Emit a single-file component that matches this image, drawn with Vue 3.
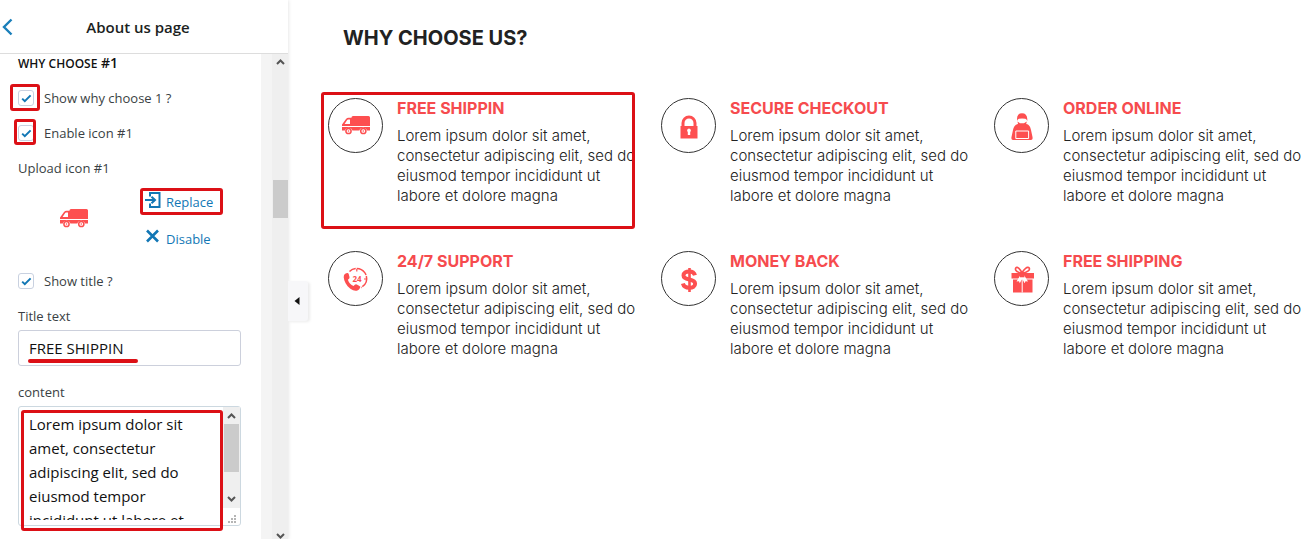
<script setup>
import { ref } from 'vue'

const showItem = ref(true)
const enableIcon = ref(true)
const showTitle = ref(true)
const titleText = ref('FREE SHIPPIN')
const content = ref('Lorem ipsum dolor sit amet, consectetur adipiscing elit, sed do eiusmod tempor incididunt ut labore et dolore magna')

const blurb = 'Lorem ipsum dolor sit amet, consectetur adipiscing elit, sed do eiusmod tempor incididunt ut labore et dolore magna'
const features = [
  { icon: 'truck', title: 'FREE SHIPPIN', marked: true },
  { icon: 'lock', title: 'SECURE CHECKOUT' },
  { icon: 'person', title: 'ORDER ONLINE' },
  { icon: 'support', title: '24/7 SUPPORT' },
  { icon: 'dollar', title: 'MONEY BACK' },
  { icon: 'gift', title: 'FREE SHIPPING' },
]
</script>

<template>
  <div class="customizer">
    <aside class="sidebar">
      <header class="bar">
        <button class="back" type="button" aria-label="Back">
          <svg width="12" height="18" viewBox="0 0 12 18"><path d="M10.500 1.500 3 9l7.500 7.500" fill="none" stroke="#1a7fba" stroke-width="2.400" /></svg>
        </button>
        <h1>About us page</h1>
      </header>
      <div class="body">
        <form class="fields" @submit.prevent>
          <h2><span>WHY CHOOSE</span> #1</h2>
          <label class="check">
            <span class="tick wide"><input v-model="showItem" type="checkbox" /><svg v-if="showItem" width="11" height="9" viewBox="0 0 11 9"><path d="m1.200 4.600 2.600 2.500L9.600 1.400" /></svg></span>
            Show why choose 1 ?
          </label>
          <label class="check">
            <span class="tick narrow"><input v-model="enableIcon" type="checkbox" /><svg v-if="enableIcon" width="11" height="9" viewBox="0 0 11 9"><path d="m1.200 4.600 2.600 2.500L9.600 1.400" /></svg></span>
            Enable icon #1
          </label>
          <p class="caption">Upload icon #1</p>
          <div class="upload">
            <div class="thumb">
              <svg width="28" height="19" viewBox="0 0 28 19" fill="#fd4f50">
                <path d="M11 0h15.500Q28 0 28 1.500V10H0V8.500L4 3Q5 1.800 6.500 1.800h3V1.500Q9.500 0 11 0zM5.200 4 2.600 8H8V3.500H6Q5.500 3.500 5.200 4z" fill-rule="evenodd" />
                <path d="M0 11h28v3.500h-3a4 4 0 0 0-7.600 0h-7a4 4 0 0 0-7.600 0H0z" />
                <g fill="#fff" stroke="#fd4f50" stroke-width="1.500"><circle cx="6.500" cy="15" r="2.600" /><circle cx="21.300" cy="15" r="2.600" /></g>
                <circle cx="6.500" cy="15" r=".8" /><circle cx="21.300" cy="15" r=".8" />
              </svg>
            </div>
            <div class="actions">
              <button class="action boxed" type="button">
                <svg width="16" height="16" viewBox="0 0 16 16" fill="none" stroke="#1277b5" stroke-width="2"><path d="M5 4.500V1h9.500v14H5v-3.500M0 8h9M6.500 4.800 10 8l-3.500 3.200" /></svg>
                <span>Replace</span>
              </button>
              <button class="action" type="button">
                <svg width="16" height="16" viewBox="0 0 16 16" fill="none" stroke="#1277b5" stroke-width="2.600"><path d="m2 1.500 11 11M13 1.500l-11 11" /></svg>
                <span>Disable</span>
              </button>
            </div>
          </div>
          <label class="check">
            <span class="tick"><input v-model="showTitle" type="checkbox" /><svg v-if="showTitle" width="11" height="9" viewBox="0 0 11 9"><path d="m1.200 4.600 2.600 2.500L9.600 1.400" /></svg></span>
            Show title ?
          </label>
          <label class="caption" for="title-text">Title text</label>
          <div class="line-field"><input id="title-text" v-model="titleText" type="text" /></div>
          <label class="caption" for="content-text">content</label>
          <div class="area">
            <textarea id="content-text" v-model="content"></textarea>
            <div class="area-side">
              <div class="area-scroll">
                <svg width="9" height="6" viewBox="0 0 9 6"><path d="m1 5 3.500-3.500L8 5" /></svg>
                <span class="area-thumb"></span>
                <svg width="9" height="6" viewBox="0 0 9 6"><path d="m1 1 3.500 3.500L8 1" /></svg>
              </div>
              <svg class="grip" width="9" height="9" viewBox="0 0 9 9" fill="#b5b5b5"><path d="M6 0h2v2H6zM3 3h2v2H3zM6 3h2v2H6zM0 6h2v2H0zM3 6h2v2H3zM6 6h2v2H6z" /></svg>
            </div>
          </div>
        </form>
        <div class="gutter"></div>
        <div class="scrollbar">
          <svg width="9" height="6" viewBox="0 0 9 6"><path d="m1 5 3.500-3.500L8 5" /></svg>
          <span class="thumb-bar"></span>
          <svg width="9" height="6" viewBox="0 0 9 6"><path d="m1 1 3.500 3.500L8 1" /></svg>
        </div>
      </div>
      <button class="collapse" type="button" aria-label="Hide controls">
        <svg width="6" height="8" viewBox="0 0 6 8"><path d="M5.500 0v8L.5 4z" fill="#111" /></svg>
      </button>
    </aside>

    <main class="preview">
      <h2>WHY CHOOSE US?</h2>
      <div class="grid">
        <article v-for="f in features" :key="f.title" class="feature" :class="{ marked: f.marked }">
          <div class="ring">
            <svg v-if="f.icon === 'truck'" width="28" height="19" viewBox="0 0 28 19" fill="#fd4f50">
              <path d="M11 0h15.500Q28 0 28 1.500V10H0V8.500L4 3Q5 1.800 6.500 1.800h3V1.500Q9.500 0 11 0zM5.200 4 2.600 8H8V3.500H6Q5.500 3.500 5.200 4z" fill-rule="evenodd" />
              <path d="M0 11h28v3.500h-3a4 4 0 0 0-7.600 0h-7a4 4 0 0 0-7.600 0H0z" />
              <g fill="#fff" stroke="#fd4f50" stroke-width="1.500"><circle cx="6.500" cy="15" r="2.600" /><circle cx="21.300" cy="15" r="2.600" /></g>
              <circle cx="6.500" cy="15" r=".8" /><circle cx="21.300" cy="15" r=".8" />
            </svg>
            <svg v-else-if="f.icon === 'lock'" width="28" height="28" viewBox="0 0 28 28" fill="#fd4f50">
              <path d="M8 15V11a6 6 0 0 1 12 0v4" fill="none" stroke="#fd4f50" stroke-width="3" />
              <path d="M5.500 14h17v12.500h-17z" />
              <path d="M14 16.500a2 2 0 0 1 1.200 3.500V23h-2.400v-3a2 2 0 0 1 1.200-3.500z" fill="#fff" />
            </svg>
            <svg v-else-if="f.icon === 'person'" width="28" height="30" viewBox="0 0 28 30" fill="#fd4f50">
              <path d="M9 10V8q0-5.700 5-5.700T19.300 8v2q-.6-1.900-2-2.300-3.300-.6-6.400 0Q9.500 8.100 9 10z" />
              <path d="M9.500 10.500 12 12.300h4l2.800-1.800-.6 2.500c3.300.8 4.200 3 4.800 6l1.500 7q.6 3-1.500 3H5q-2.100 0-1.500-3L5 19c.6-3 1.700-5.200 5-6z" />
              <path d="M7.800 27.500V20h12.800v7.500z" fill="none" stroke="#fff" stroke-width="1" />
            </svg>
            <svg v-else-if="f.icon === 'support'" width="28" height="28" viewBox="0 0 28 28" fill="#fd4f50">
              <path d="M7.500 6.500a10 10 0 1 1 11.500 16" fill="none" stroke="#fd4f50" stroke-width="1.500" stroke-dasharray="7 1 12 1 12 1 20" />
              <path d="M14.800 4v2.500M24.500 14h-2.500" stroke="#fd4f50" stroke-width="1.200" />
              <path d="M3.200 8.800 5 8q1.300-.3 1.700 1l.8 3q.3 1.300-.8 2l-.8.7q1.300 4.500 5.700 6.200l1.200-1.100q.9-.8 2-.3l2.700 1.400q1.200.7.5 2-1 1.800-2.100 2.400-3.300 1.500-7.500-1.500C4.300 20.500 2 16.500 1.700 12.300q-.1-2.600 1.500-3.500z" />
              <text x="15" y="16.800" text-anchor="middle" font-family="Open Sans, sans-serif" font-size="8" font-weight="700">24</text>
            </svg>
            <svg v-else-if="f.icon === 'dollar'" width="28" height="28" viewBox="0 0 28 28" fill="none" stroke="#fd4f50">
              <path d="M20 10.200C19.300 7.800 17 6.500 14.200 6.500 11 6.500 8.500 7.900 8.500 10.500c0 2.700 2.700 3.400 5.700 4 3.200.7 5.900 1.400 5.900 4.200 0 2.600-2.500 4.100-5.700 4.100-3.400 0-5.800-1.500-6.500-4.300" stroke-width="4" />
              <path d="M14.500 3v24" stroke-width="2.600" />
            </svg>
            <svg v-else width="28" height="30" viewBox="0 0 28 30" fill="#fd4f50">
              <path d="M14 9C12.500 5.500 9.300 1.800 7.800 4 6.600 6 9 8.600 14 9c5-.4 8.400-3 7.200-5C19.700 1.800 15.500 5.500 14 9z" fill="none" stroke="#fd4f50" stroke-width="1.600" />
              <path d="M3.500 9H26v5.500H3.500zM5 15.500h19.500v13H5z" />
              <path d="M12.200 11.500 8.500 17.500l2.500-.3.800 2 2.400-4.500 2.400 4.500.9-2 2.500.3-3.700-6z" fill="#fff" />
              <path d="M12 9.500h4.500v3.800H12z" />
              <path d="M14.200 15v13.500" stroke="#fff" stroke-width="1" />
            </svg>
          </div>
          <div class="copy">
            <h3>{{ f.title }}</h3>
            <p>{{ blurb }}</p>
          </div>
        </article>
      </div>
    </main>
  </div>
</template>

<style>
body {
  background: #fff;
}
</style>

<style scoped>
* {
  box-sizing: border-box;
}
h1, h2, h3, p {
  margin: 0;
}
button {
  padding: 0;
  border: 0;
  background: none;
  cursor: pointer;
}
svg {
  display: block;
}
.customizer {
  display: flex;
  height: 100vh;
  overflow: hidden;
}
.sidebar {
  position: relative;
  flex: none;
  display: flex;
  flex-direction: column;
  width: 288px;
  background: #fff;
  box-shadow: 0 0 4px rgba(0, 0, 0, 0.14);
  font-family: "Open Sans", "Noto Sans", sans-serif;
  color: #3a3f44;
}
.bar {
  flex: none;
  display: flex;
  align-items: center;
  height: 54px;
  border-bottom: 1px solid #ddd;
}
.back {
  flex: none;
  width: 16px;
  padding-left: 1px;
}
.bar h1 {
  flex: 1;
  padding-right: 28px;
  text-align: center;
  font-size: 15px;
  font-weight: 600;
  color: #1c1f22;
}
.body {
  flex: 1;
  min-height: 0;
  display: flex;
}
.fields {
  flex: 1;
  min-width: 0;
  overflow: hidden;
  padding: 0 20px 0 18px;
  font-size: 13px;
  line-height: 20px;
}
.fields h2 {
  font-size: 14px;
  line-height: 18px;
  font-weight: 600;
  color: #111;
}
.fields h2 span {
  font-size: 12px;
}
.check {
  display: flex;
  align-items: center;
  gap: 10px;
  margin-top: 15px;
}
.caption {
  display: block;
  margin-top: 15px;
}
.tick {
  position: relative;
  display: grid;
  place-items: center;
  width: 16px;
  height: 16px;
}
.tick input {
  grid-area: 1 / 1;
  appearance: none;
  width: 16px;
  height: 16px;
  margin: 0;
  border: 1px solid #c9d1e0;
  border-radius: 3px;
  background: #fff;
}
.tick svg {
  grid-area: 1 / 1;
  z-index: 1;
  fill: none;
  stroke: #1277b5;
  stroke-width: 2;
}
.tick.wide::after,
.tick.narrow::after,
.boxed::after,
.area::after,
.marked::after {
  content: "";
  position: absolute;
  border: 3px solid #dc1016;
  border-radius: 3px;
  pointer-events: none;
}
.tick.wide::after {
  inset: -6px -6px -5px -8px;
}
.tick.narrow::after {
  inset: -6px -2px -4px -4px;
}
.upload {
  display: flex;
  margin-top: 14px;
}
.thumb {
  flex: none;
  display: flex;
  align-items: center;
  justify-content: center;
  width: 112px;
  padding-bottom: 4px;
}
.actions {
  display: flex;
  flex-direction: column;
  align-items: flex-start;
  gap: 17px;
  padding-left: 15px;
}
.action {
  position: relative;
  display: flex;
  align-items: flex-start;
  gap: 5px;
  font-family: inherit;
  font-size: 13px;
  line-height: 20px;
  color: #1277b5;
}
.boxed::after {
  inset: -4px -10px -3px -5px;
}
.upload + .check {
  margin-top: 22px;
}
.line-field {
  position: relative;
  margin-top: 4px;
}
.line-field input {
  display: block;
  width: 100%;
  height: 36px;
  padding: 0 10px;
  border: 1px solid #ccd0dc;
  border-radius: 3px;
  font-family: inherit;
  font-size: 15px;
  color: #111;
  background: #fff;
}
.line-field::after {
  content: "";
  position: absolute;
  left: 10px;
  bottom: 3px;
  width: 110px;
  height: 4px;
  border-radius: 2px;
  background: #dc1016;
}
.line-field + .caption {
  margin-top: 16px;
}
.area {
  position: relative;
  display: flex;
  height: 120px;
  margin-top: 4px;
  border: 1px solid #ccd8e0;
  border-radius: 3px;
}
.area::after {
  inset: 3px 17px -6px 2px;
}
.area textarea {
  flex: 1;
  min-width: 0;
  height: 113px;
  padding: 5px 4px 0 10px;
  border: 0;
  outline: 0;
  resize: none;
  overflow: hidden;
  background: transparent;
  font-family: inherit;
  font-size: 15px;
  line-height: 24px;
  color: #111;
}
.area-side {
  flex: none;
  display: flex;
  flex-direction: column;
  align-items: stretch;
  width: 17px;
}
.area-scroll,
.scrollbar {
  display: flex;
  flex-direction: column;
  align-items: center;
  background: #efefef;
}
.area-scroll {
  height: 101px;
  padding: 6px 0;
}
.area-scroll svg,
.scrollbar svg {
  flex: none;
  fill: none;
  stroke: #555;
  stroke-width: 2;
}
.area-scroll svg:last-child,
.scrollbar svg:last-child {
  margin-top: auto;
}
.area-thumb {
  width: 15px;
  height: 48px;
  margin-top: 5px;
  background: #cbcbcb;
}
.grip {
  margin: 7px 0 0 5px;
}
.gutter {
  flex: none;
  width: 11px;
  background: #f4f4f4;
}
.scrollbar {
  flex: none;
  width: 16px;
  padding-top: 5px;
}
.thumb-bar {
  flex: none;
  width: 15px;
  height: 38px;
  margin-top: 115px;
  background: #cbcbcb;
}
.collapse {
  position: absolute;
  top: 281px;
  left: 100%;
  display: grid;
  place-items: center;
  width: 20px;
  height: 40px;
  padding-right: 3px;
  border-radius: 0 3px 3px 0;
  background: #f7f7f9;
  box-shadow: 2px 1px 3px rgba(0, 0, 0, 0.08);
}
.preview {
  flex: 1;
  min-width: 0;
  padding: 26px 6px 0 40px;
  font-family: Inter, "Open Sans", sans-serif;
  color: #222;
}
.preview h2 {
  padding-left: 15px;
  font-size: 20px;
  line-height: 24px;
  font-weight: 700;
  color: #222;
}
.grid {
  display: grid;
  grid-template-columns: repeat(3, minmax(0, 1fr));
  gap: 45px 20px;
  margin-top: 48px;
}
.feature {
  position: relative;
  display: flex;
  gap: 14px;
}
.marked::after {
  inset: -6px 6px -23px -7px;
}
.ring {
  flex: none;
  display: grid;
  place-items: center;
  width: 55px;
  height: 55px;
  border: 1px solid #333;
  border-radius: 50%;
}
.copy {
  flex: 1;
  min-width: 0;
}
.copy h3 {
  font-size: 16px;
  line-height: 20px;
  font-weight: 700;
  color: #f64b4e;
}
.copy p {
  margin-top: 8px;
  font-size: 15px;
  line-height: 20px;
  font-weight: 300;
}
</style>
